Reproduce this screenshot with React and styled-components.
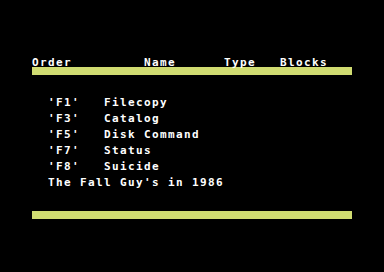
import React from 'react';
import styled, {createGlobalStyle} from 'styled-components';

const GlobalStyle = createGlobalStyle`
  html, body {
    margin: 0;
    padding: 0;
    background: #000;
  }
  body {
    width: 384px;
    height: 272px;
    overflow: hidden;
  }
`;

const Screen = styled.div`
  display: grid;
  grid-template-rows: repeat(25, 8px);
  width: 320px;
  margin: 35px 32px 0;
  color: #ffffff;
  font-family: "DejaVu Sans Mono", "Liberation Mono", monospace;
  font-weight: bold;
  font-size: 11px;
  line-height: 8px;
  letter-spacing: 1.38px;
`;

const Row = styled.div`
  grid-row: ${props => props.row};
  display: grid;
  grid-template-columns: repeat(40, 8px);
  white-space: pre;
`;

const Cell = styled.span`
  grid-column: ${props => props.col} / span ${props => props.span};
  transform: translateY(-0.5px);
`;

const Bar = styled.div`
  grid-row: ${props => props.row};
  background: #d0dc71;
`;

const keys = [
    {key: "'F1'", label: 'Filecopy'},
    {key: "'F3'", label: 'Catalog'},
    {key: "'F5'", label: 'Disk Command'},
    {key: "'F7'", label: 'Status'},
    {key: "'F8'", label: 'Suicide'},
];

const App = () => {
    return (
        <>
            <GlobalStyle/>
            <Screen>
                <Row row={4}>
                    <Cell col={1} span={14}>Order</Cell>
                    <Cell col={15} span={10}>Name</Cell>
                    <Cell col={25} span={7}>Type</Cell>
                    <Cell col={32} span={9}>Blocks</Cell>
                </Row>
                <Bar row={5}/>
                {keys.map((item, i) => (
                    <Row key={item.key} row={9 + i * 2}>
                        <Cell col={3} span={7}>{item.key}</Cell>
                        <Cell col={10} span={20}>{item.label}</Cell>
                    </Row>
                ))}
                <Row row={19}>
                    <Cell col={3} span={30}>The Fall Guy's in 1986</Cell>
                </Row>
                <Bar row={23}/>
            </Screen>
        </>
    );
};

export default App;
